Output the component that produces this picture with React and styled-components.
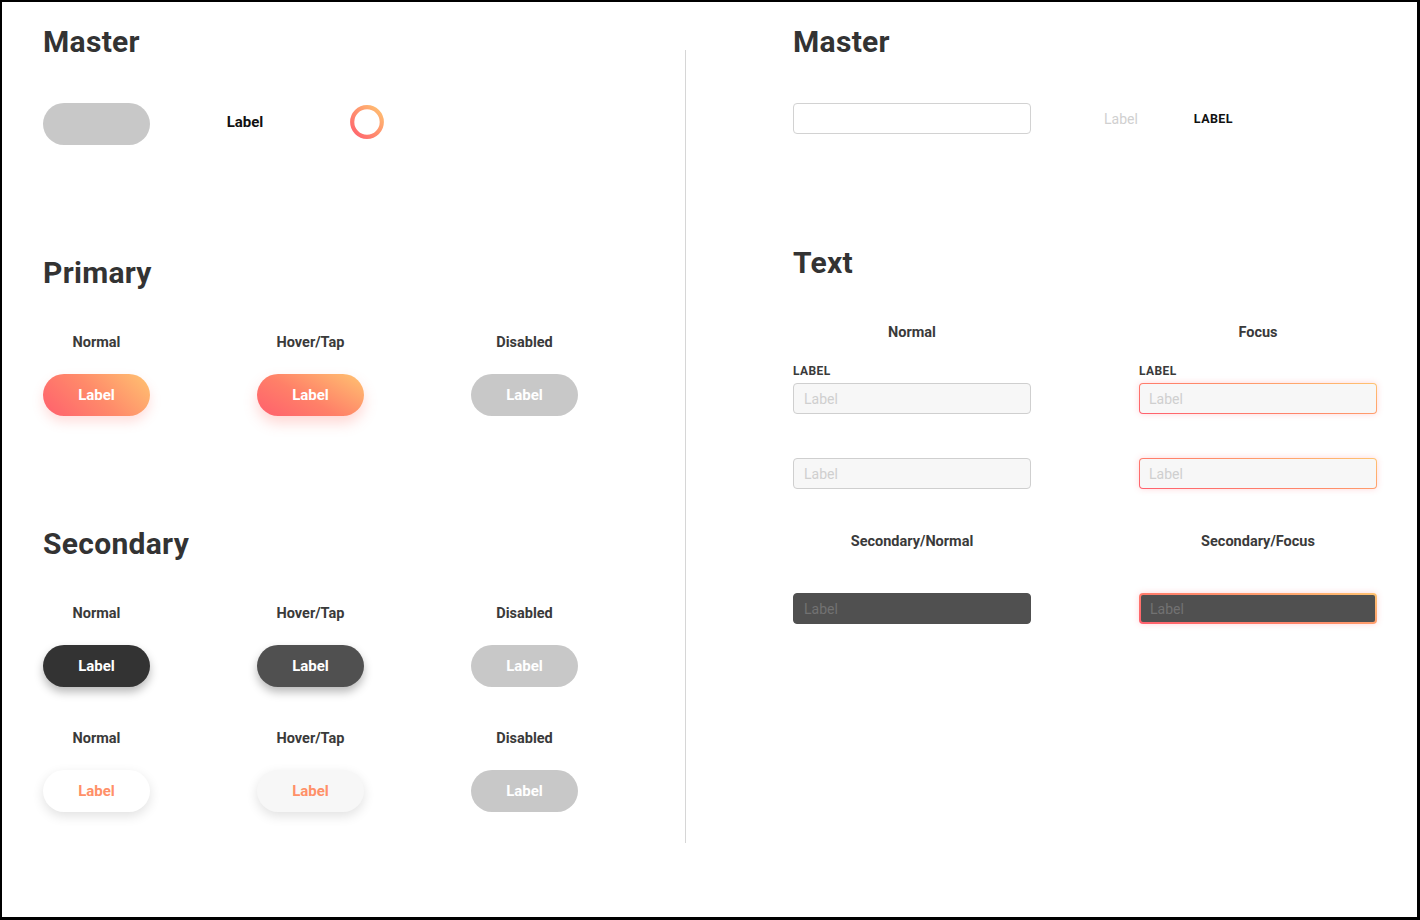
import React from "react";
import styled, { createGlobalStyle, css } from "styled-components";

const GlobalStyle = createGlobalStyle`
  * { box-sizing: border-box; }
  body {
    margin: 0;
    background: #fff;
    font-family: Roboto, "Liberation Sans", sans-serif;
    color: #333;
  }
`;

const buttonStates = ["Normal", "Hover/Tap", "Disabled"];

const buttonGroups = [
  {
    title: "Primary",
    rows: [["primary", "primaryHover", "disabled"]],
  },
  {
    title: "Secondary",
    rows: [
      ["dark", "darkHover", "disabled"],
      ["light", "lightHover", "disabled"],
    ],
  },
];

const textColumns = [
  { title: "Normal", secondary: "Secondary/Normal", focus: false },
  { title: "Focus", secondary: "Secondary/Focus", focus: true },
];

const RingIcon = () => (
  <svg width="34" height="34" viewBox="0 0 34 34">
    <defs>
      <linearGradient id="ringGrad" x1="0" y1="1" x2="1" y2="0">
        <stop offset="0%" stopColor="#ff5f6d" />
        <stop offset="100%" stopColor="#ffc371" />
      </linearGradient>
    </defs>
    <circle cx="17" cy="17" r="14.8" fill="none" stroke="url(#ringGrad)" strokeWidth="4.2" />
  </svg>
);

export default function App() {
  return (
    <>
      <GlobalStyle />
      <Frame>
        <ButtonsArea>
          <Heading>Master</Heading>
          <MasterRow>
            <MasterPill />
            <MasterLabel>Label</MasterLabel>
            <RingSlot>
              <RingIcon />
            </RingSlot>
          </MasterRow>

          {buttonGroups.map(({ title, rows }) => (
            <Group key={title}>
              <Heading>{title}</Heading>
              {rows.map((row, i) => (
                <ButtonRow key={i}>
                  {row.map((variant, j) => (
                    <ButtonCell key={variant + j}>
                      <StateLabel>{buttonStates[j]}</StateLabel>
                      <Button $variant={variant}>Label</Button>
                    </ButtonCell>
                  ))}
                </ButtonRow>
              ))}
            </Group>
          ))}
        </ButtonsArea>

        <Divider />

        <TextArea>
          <Heading>Master</Heading>
          <TextMasterRow>
            <MasterInput readOnly />
            <PlaceholderSample>Label</PlaceholderSample>
            <CapsLabel $dark>LABEL</CapsLabel>
          </TextMasterRow>

          <Group $top={111}>
            <Heading>Text</Heading>
            <TextGrid>
              {textColumns.map(({ title, secondary, focus }) => (
                <TextColumn key={title}>
                  <StateLabel>{title}</StateLabel>
                  <FieldGroup>
                    <CapsLabel>LABEL</CapsLabel>
                    <Field placeholder="Label" readOnly $focus={focus} />
                  </FieldGroup>
                  <Field placeholder="Label" readOnly $focus={focus} $spaced />
                  <SecondaryTitle>{secondary}</SecondaryTitle>
                  <Field placeholder="Label" readOnly $focus={focus} $dark />
                </TextColumn>
              ))}
            </TextGrid>
          </Group>
        </TextArea>
      </Frame>
    </>
  );
}

const Frame = styled.div`
  width: 1420px;
  height: 920px;
  border: 2px solid #000;
  border-right-width: 3px;
  border-bottom-width: 3px;
  display: flex;
  align-items: flex-start;
  overflow: hidden;
`;

const ButtonsArea = styled.div`
  width: 683px;
  padding: 22px 0 0 41px;
  display: flex;
  flex-direction: column;
`;

const Divider = styled.div`
  width: 1px;
  height: 793px;
  margin-top: 48px;
  background: #d6d6d6;
`;

const TextArea = styled.div`
  flex: 1;
  padding: 22px 0 0 107px;
  display: flex;
  flex-direction: column;
`;

const Heading = styled.h2`
  margin: 0;
  font-size: 30px;
  line-height: 36px;
  font-weight: 700;
  color: #333;
  letter-spacing: 0.3px;
`;

const Group = styled.section`
  display: flex;
  flex-direction: column;
  margin-top: ${({ $top }) => $top ?? 110}px;
`;

const MasterRow = styled.div`
  display: flex;
  align-items: center;
  margin-top: 43px;
`;

const MasterPill = styled.div`
  width: 107px;
  height: 42px;
  border-radius: 21px;
  background: #c8c8c8;
`;

const MasterLabel = styled.span`
  width: 60px;
  margin-left: 65px;
  text-align: center;
  font-size: 15px;
  font-weight: 700;
  color: #111;
  margin-top: -4px;
`;

const RingSlot = styled.div`
  display: flex;
  margin-left: 75px;
  margin-top: -4px;
`;

const ButtonRow = styled.div`
  display: grid;
  grid-template-columns: repeat(3, 107px);
  column-gap: 107px;
  margin-top: 43px;

  & + & {
    margin-top: 43px;
  }
`;

const ButtonCell = styled.div`
  display: flex;
  flex-direction: column;
  align-items: center;
  gap: 22px;
`;

const StateLabel = styled.div`
  font-size: 14.5px;
  line-height: 18px;
  font-weight: 700;
  color: #3a3a3a;
  text-align: center;
`;

const variants = {
  primary: css`
    background: linear-gradient(225deg, #ffc371 0%, #ff8a6a 50%, #ff5f6d 100%);
    color: #fff;
    box-shadow: 0 6px 12px rgba(255, 110, 100, 0.22);
  `,
  primaryHover: css`
    background: linear-gradient(210deg, #ffc371 0%, #ff8068 55%, #ff5f6d 100%);
    color: #fff;
    box-shadow: 0 7px 14px rgba(255, 110, 100, 0.28);
  `,
  disabled: css`
    background: #c8c8c8;
    color: #fff;
  `,
  dark: css`
    background: #333;
    color: #fff;
    box-shadow: 0 5px 10px rgba(0, 0, 0, 0.28);
  `,
  darkHover: css`
    background: #505050;
    color: #fff;
    box-shadow: 0 5px 10px rgba(0, 0, 0, 0.28);
  `,
  light: css`
    background: #fff;
    color: #ff9068;
    box-shadow: 0 4px 12px rgba(0, 0, 0, 0.12);
  `,
  lightHover: css`
    background: #f7f7f7;
    color: #ff9068;
    box-shadow: 0 4px 12px rgba(0, 0, 0, 0.12);
  `,
};

const Button = styled.button`
  width: 107px;
  height: 42px;
  border: none;
  border-radius: 21px;
  font-family: inherit;
  font-size: 15px;
  font-weight: 700;
  padding: 0;
  cursor: pointer;
  ${({ $variant }) => variants[$variant]}
`;

const TextMasterRow = styled.div`
  display: flex;
  align-items: center;
  margin-top: 43px;
`;

const MasterInput = styled.input`
  width: 238px;
  height: 31px;
  border: 1px solid #d2d2d2;
  border-radius: 4px;
  background: #fff;
  outline: none;
`;

const PlaceholderSample = styled.span`
  margin-left: 73px;
  font-size: 14px;
  color: #d0d0d0;
`;

const CapsLabel = styled.span`
  font-size: ${({ $dark }) => ($dark ? "12.5px" : "12px")};
  line-height: 14px;
  font-weight: 700;
  letter-spacing: 0.4px;
  color: ${({ $dark }) => ($dark ? "#111" : "#3a3a3a")};
  margin-left: ${({ $dark }) => ($dark ? "56px" : "0")};
`;

const TextGrid = styled.div`
  display: grid;
  grid-template-columns: repeat(2, 238px);
  column-gap: 108px;
  margin-top: 43px;
`;

const TextColumn = styled.div`
  display: flex;
  flex-direction: column;
`;

const FieldGroup = styled.div`
  display: flex;
  flex-direction: column;
  gap: 5px;
  margin-top: 22px;
`;

const SecondaryTitle = styled(StateLabel)`
  margin-top: 44px;
`;

const Field = styled.input`
  width: 238px;
  height: 31px;
  border-radius: 4px;
  padding: 0 10px;
  font-family: inherit;
  font-size: 14px;
  outline: none;
  margin-top: ${({ $spaced, $dark }) => ($spaced ? "44px" : $dark ? "42px" : "0")};
  border: 1px solid ${({ $dark }) => ($dark ? "#505050" : "#cfcfcf")};
  background: ${({ $dark }) => ($dark ? "#505050" : "#f7f7f7")};

  &::placeholder {
    color: ${({ $dark }) => ($dark ? "#727272" : "#cfcfcf")};
  }

  ${({ $focus, $dark }) =>
    $focus &&
    css`
      border: ${$dark ? "2px" : "1.5px"} solid transparent;
      padding: 0 9px;
      background: linear-gradient(${$dark ? "#505050" : "#f7f7f7"}, ${$dark ? "#505050" : "#f7f7f7"}) padding-box,
        linear-gradient(15deg, #ff5f6d 0%, #ff8a6a 50%, #ffc371 100%) border-box;
      box-shadow: 0 0 6px rgba(255, 95, 109, 0.25);
    `}
`;
